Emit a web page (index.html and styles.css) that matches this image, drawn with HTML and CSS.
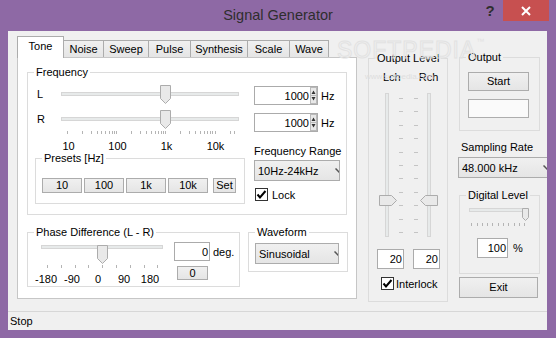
FILE: index.html
```html
<!DOCTYPE html>
<html>
<head>
    <meta charset="utf-8">
    <title>Signal Generator</title>
    <link rel="stylesheet" href="styles.css">
</head>
<body>
<div class="window">
    <div class="titlebar">
        <div></div>
        <div class="title">Signal Generator</div>
        <div class="caption-buttons">
            <span class="help">?</span>
            <span class="close"><svg width="10" height="10" viewBox="0 0 10 10"><path d="M1 1L9 9M9 1L1 9" stroke="#fff" stroke-width="2"/></svg></span>
        </div>
    </div>

    <div class="client">
        <div class="main">

            <!-- Tab control -->
            <div class="tabctl">
                <div class="tabs">
                    <div class="tab active">Tone</div>
                    <div class="tab">Noise</div>
                    <div class="tab">Sweep</div>
                    <div class="tab">Pulse</div>
                    <div class="tab">Synthesis</div>
                    <div class="tab">Scale</div>
                    <div class="tab">Wave</div>
                </div>
                <div class="page">
                    <fieldset class="freq">
                        <legend>Frequency</legend>
                        <div class="freq-body">
                            <div class="freq-left">
                                <div class="srow">
                                    <span class="slabel">L</span>
                                    <div class="hslider">
                                        <div class="track"></div>
                                        <svg class="thumb" style="left:99px" width="11" height="19" viewBox="0 0 11 19"><path d="M0.5 0.5H10.5V13.5L5.5 18.5L0.5 13.5Z" fill="#e9e9e9" stroke="#acacac"/></svg>
                                    </div>
                                </div>
                                <div class="srow">
                                    <span class="slabel">R</span>
                                    <div class="hslider">
                                        <div class="track"></div>
                                        <svg class="thumb" style="left:99px" width="11" height="19" viewBox="0 0 11 19"><path d="M0.5 0.5H10.5V13.5L5.5 18.5L0.5 13.5Z" fill="#e9e9e9" stroke="#acacac"/></svg>
                                    </div>
                                </div>
                                <svg class="ticks freq-ticks" width="178" height="3"><path d="M6.5 0V3M21.5 0V3M30.5 0V3M36.5 0V3M40.5 0V3M44.5 0V3M48.5 0V3M51.5 0V3M53.5 0V3M55.5 0V3M70.5 0V3M79.5 0V3M85.5 0V3M90.5 0V3M94.5 0V3M97.5 0V3M100.5 0V3M102.5 0V3M104.5 0V3M119.5 0V3M128.5 0V3M134.5 0V3M139.5 0V3M143.5 0V3M146.5 0V3M149.5 0V3M151.5 0V3M154.5 0V3M169.5 0V3M173.5 0V3" stroke="#b4b4b4"/></svg>
                                <div class="scale freq-scale"><span>10</span><span>100</span><span>1k</span><span>10k</span></div>
                                <fieldset class="presets">
                                    <legend>Presets [Hz]</legend>
                                    <div class="preset-buttons">
                                        <div class="button">10</div>
                                        <div class="button">100</div>
                                        <div class="button">1k</div>
                                        <div class="button">10k</div>
                                        <div class="button set">Set</div>
                                    </div>
                                </fieldset>
                            </div>
                            <div class="freq-right">
                                <div class="edit-row first">
                                    <div class="edit spin-edit"><span class="val">1000</span>
                                        <svg class="spin" width="7" height="17" viewBox="0 0 7 17"><rect x="0.5" y="0.5" width="6" height="16" fill="#e8e8e8" stroke="#b9b9b9"/><path d="M0.5 8.5H6.5" stroke="#b9b9b9"/><path d="M1.5 7L3.5 3.5L5.5 7Z M1.5 10L3.5 13.5L5.5 10Z" fill="#333"/></svg>
                                    </div>
                                    <span class="unit">Hz</span>
                                </div>
                                <div class="edit-row second">
                                    <div class="edit spin-edit"><span class="val">1000</span>
                                        <svg class="spin" width="7" height="17" viewBox="0 0 7 17"><rect x="0.5" y="0.5" width="6" height="16" fill="#e8e8e8" stroke="#b9b9b9"/><path d="M0.5 8.5H6.5" stroke="#b9b9b9"/><path d="M1.5 7L3.5 3.5L5.5 7Z M1.5 10L3.5 13.5L5.5 10Z" fill="#333"/></svg>
                                    </div>
                                    <span class="unit">Hz</span>
                                </div>
                                <div class="caption range-cap">Frequency Range</div>
                                <div class="combo range">10Hz-24kHz<svg class="chev" width="8" height="5" viewBox="0 0 8 5"><path d="M0.5 0.5L4 4L7.5 0.5" fill="none" stroke="#555" stroke-width="1.5"/></svg></div>
                                <div class="check lock">
                                    <svg width="13" height="13" viewBox="0 0 13 13"><rect x="0.5" y="0.5" width="12" height="12" fill="#fff" stroke="#333"/><path d="M2.5 6.5L5 9.5L10.5 3" fill="none" stroke="#000" stroke-width="2"/></svg>
                                    <span>Lock</span>
                                </div>
                            </div>
                        </div>
                    </fieldset>

                    <div class="page-row">
                        <fieldset class="phase">
                            <legend>Phase Difference (L - R)</legend>
                            <div class="phase-body">
                                <div class="phase-left">
                                    <div class="hslider phase-slider">
                                        <div class="track"></div>
                                        <svg class="thumb" style="left:56px" width="11" height="19" viewBox="0 0 11 19"><path d="M0.5 0.5H10.5V13.5L5.5 18.5L0.5 13.5Z" fill="#e9e9e9" stroke="#acacac"/></svg>
                                    </div>
                                    <svg class="ticks phase-ticks" width="122" height="3"><path d="M6.5 0V3M20.5 0V3M34.5 0V3M47.5 0V3M61.5 0V3M75.5 0V3M89.5 0V3M103.5 0V3M116.5 0V3" stroke="#b4b4b4"/></svg>
                                    <div class="scale phase-scale"><span>-180</span><span>-90</span><span>0</span><span>90</span><span>180</span></div>
                                </div>
                                <div class="phase-right">
                                    <div class="edit-row">
                                        <div class="edit deg-edit"><span class="val">0</span></div>
                                        <span class="unit">deg.</span>
                                    </div>
                                    <div class="button zero">0</div>
                                </div>
                            </div>
                        </fieldset>
                        <fieldset class="waveform">
                            <legend>Waveform</legend>
                            <div class="combo wave">Sinusoidal<svg class="chev" width="8" height="5" viewBox="0 0 8 5"><path d="M0.5 0.5L4 4L7.5 0.5" fill="none" stroke="#555" stroke-width="1.5"/></svg></div>
                        </fieldset>
                    </div>
                </div>
            </div>

            <!-- Output level -->
            <fieldset class="outlevel">
                <legend>Output Level</legend>
                <div class="chan-labels"><span>Lch</span><span class="rch">Rch</span></div>
                <div class="vsliders">
                    <div class="vslider left">
                        <div class="vtrack"></div>
                        <svg class="vthumb" style="top:102px" width="18" height="11" viewBox="0 0 18 11"><path d="M0.5 0.5H12.5L17.5 5.5L12.5 10.5H0.5Z" fill="#e9e9e9" stroke="#acacac"/></svg>
                    </div>
                    <svg class="vticks" width="23" height="144"><path d="M2 5.5H6M17 5.5H21M2 18.5H6M17 18.5H21M2 32.5H6M17 32.5H21M2 45.5H6M17 45.5H21M2 59.5H6M17 59.5H21M2 72.5H6M17 72.5H21M2 85.5H6M17 85.5H21M2 99.5H6M17 99.5H21M2 112.5H6M17 112.5H21M2 126.5H6M17 126.5H21M2 139.5H6M17 139.5H21" stroke="#c4c4c4"/></svg>
                    <div class="vslider right">
                        <div class="vtrack"></div>
                        <svg class="vthumb" style="top:102px" width="18" height="11" viewBox="0 0 18 11"><path d="M17.5 0.5H5.5L0.5 5.5L5.5 10.5H17.5Z" fill="#e9e9e9" stroke="#acacac"/></svg>
                    </div>
                </div>
                <div class="level-edits">
                    <div class="edit level-edit"><span class="val">20</span></div>
                    <div class="edit level-edit"><span class="val">20</span></div>
                </div>
                <div class="check interlock">
                    <svg width="13" height="13" viewBox="0 0 13 13"><rect x="0.5" y="0.5" width="12" height="12" fill="#fff" stroke="#333"/><path d="M2.5 6.5L5 9.5L10.5 3" fill="none" stroke="#000" stroke-width="2"/></svg>
                    <span>Interlock</span>
                </div>
            </fieldset>

            <!-- Right column -->
            <div class="side">
                <fieldset class="output">
                    <legend>Output</legend>
                    <div class="button start">Start</div>
                    <div class="blank"></div>
                </fieldset>
                <div class="caption rate-cap">Sampling Rate</div>
                <div class="combo rate">48.000 kHz<svg class="chev" width="8" height="5" viewBox="0 0 8 5"><path d="M0.5 0.5L4 4L7.5 0.5" fill="none" stroke="#555" stroke-width="1.5"/></svg></div>
                <fieldset class="digital">
                    <legend>Digital Level</legend>
                    <div class="hslider small">
                        <div class="track"></div>
                        <svg class="thumb" style="left:53px" width="7" height="13" viewBox="0 0 7 13"><path d="M0.5 0.5H6.5V9.5L3.5 12.5L0.5 9.5Z" fill="#e9e9e9" stroke="#acacac"/></svg>
                    </div>
                    <svg class="ticks digital-ticks" width="60" height="3"><path d="M2.5 0V3M8.5 0V3M13.5 0V3M18.5 0V3M23.5 0V3M29.5 0V3M34.5 0V3M39.5 0V3M45.5 0V3M50.5 0V3M55.5 0V3" stroke="#b4b4b4"/></svg>
                    <div class="edit-row pct-row">
                        <div class="edit pct-edit"><span class="val">100</span></div>
                        <span class="unit">%</span>
                    </div>
                </fieldset>
                <div class="button exit">Exit</div>
            </div>

            <!-- watermark over the dialog -->
            <div class="watermark">SOFTPEDIA<span class="tm">™</span></div>
            <div class="watermark-url">www.softpedia.com</div>
        </div>
        <div class="status">Stop</div>
    </div>
</div>
</body>
</html>
```

FILE: styles.css
```css
/* --- Base --- */
* { box-sizing: border-box; }
body { margin: 0; background: #8e69a5; font-family: "Liberation Sans", Arial, sans-serif; font-size: 11px; color: #000; }
.window { position: relative; width: 556px; height: 338px; background: #8e69a5; display: flex; flex-direction: column; }

/* --- Title bar --- */
.titlebar { height: 31px; flex: none; display: grid; grid-template-columns: 1fr auto 1fr; }
.title { line-height: 31px; font-size: 14.5px; color: #2e2e2e; }
.caption-buttons { display: flex; justify-content: flex-end; align-items: flex-start; padding-right: 7px; }
.help { width: 26px; height: 21px; line-height: 21px; text-align: center; font-size: 15px; font-weight: bold; color: #2e2e2e; }
.close { width: 46px; height: 21px; background: #c75050; display: flex; align-items: center; justify-content: center; }

/* --- Client area --- */
.client { flex: 1; margin: 0 9px 8px 8px; background: #f0f0f0; display: flex; flex-direction: column; overflow: hidden; }
.main { position: relative; flex: 1; display: flex; align-items: flex-start; padding: 5px 0 0 9px; }
.status { height: 19px; flex: none; border-top: 1px solid #d7d7d7; padding-left: 2px; line-height: 19px; }

/* --- Common controls --- */
fieldset { margin: 0; padding: 0; min-width: 0; border: 1px solid #dcdcdc; }
legend { margin-left: 6px; padding: 0 2px; line-height: 13px; }
.button { border: 1px solid #acacac; background: linear-gradient(#f0f0f0, #e5e5e5); text-align: center; }
.edit { display: flex; align-items: center; border: 1px solid #ababab; background: #fff; }
.edit .val { flex: 1; text-align: right; padding-right: 1px; }
.edit-row { display: flex; align-items: center; }
.unit { margin-left: 3px; }
.caption { line-height: 13px; }
.combo { display: flex; align-items: center; height: 21px; padding-left: 3px; border: 1px solid #acacac; background: linear-gradient(#f0f0f0, #e5e5e5); overflow: hidden; white-space: nowrap; }
.combo .chev { margin-left: auto; margin-right: -4px; flex: none; }
.check { display: flex; align-items: center; gap: 4px; height: 13px; }
.check svg { flex: none; }

/* --- Sliders --- */
.hslider { position: relative; width: 178px; height: 19px; }
.track { height: 4px; margin-top: 7px; border: 1px solid #d6d6d6; background: #e7eaea; }
.thumb { position: absolute; top: 0; }
.ticks { display: block; }
.scale { display: flex; }
.scale span { text-align: center; }

/* --- Tabs --- */
.tabctl { width: 340px; flex: none; display: flex; flex-direction: column; }
.tabs { height: 21px; display: flex; align-items: flex-end; }
.tab { height: 17px; margin-right: -1px; border: 1px solid #acacac; border-bottom: none; background: linear-gradient(#f0f0f0, #e5e5e5); text-align: center; line-height: 16px; }
.tab.active { position: relative; z-index: 1; height: 22px; margin-bottom: -1px; background: #fff; line-height: 18px; }
.tab:nth-child(1) { width: 47px; }
.tab:nth-child(2) { width: 41px; }
.tab:nth-child(3) { width: 46px; }
.tab:nth-child(4) { width: 43px; }
.tab:nth-child(5) { width: 58px; }
.tab:nth-child(6) { width: 43px; }
.tab:nth-child(7) { width: 40px; }
.page { height: 242px; padding-left: 9px; border: 1px solid #c6c6c6; background: #fff; display: flex; flex-direction: column; }

/* --- Frequency group --- */
.freq { width: 320px; height: 149px; margin-top: 8px; }
.freq-body { display: flex; }
.freq-left { width: 226px; flex: none; }
.srow { display: flex; height: 19px; margin-top: 6px; }
.slabel { width: 33px; padding-left: 9px; line-height: 19px; }
.freq-ticks { margin: 2px 0 0 33px; }
.freq-scale { height: 12px; margin: 6px 0 0 16px; line-height: 12px; }
.freq-scale span { width: 49px; }
.presets { width: 210px; height: 52px; margin-left: 7px; }
.preset-buttons { display: flex; gap: 2px; margin-top: 13px; padding-left: 6px; }
.preset-buttons .button { width: 40px; height: 15px; line-height: 13px; }
.preset-buttons .set { width: 23px; margin-left: 3px; }
.freq-right { width: 92px; }
.freq-right .first { margin-top: 7px; }
.freq-right .second { margin-top: 8px; }
.spin-edit { width: 64px; height: 19px; }
.spin { flex: none; margin-right: 0; }
.range-cap { margin-top: 13px; }
.combo.range { width: 86px; margin-top: 2px; }
.lock { margin: 7px 0 0 1px; }

/* --- Phase / Waveform --- */
.page-row { display: flex; align-items: flex-start; gap: 8px; margin-top: 11px; }
.phase { width: 213px; height: 61px; }
.phase-body { display: flex; }
.phase-left { width: 122px; margin-left: 13px; flex: none; }
.phase-slider { width: 122px; margin-top: 2px; }
.phase-slider .track { margin-top: 6px; }
.phase-ticks { margin-top: 1px; }
.phase-scale { height: 13px; margin: 5px 0 0 -8px; line-height: 13px; }
.phase-scale span { width: 27.5px; }
.phase-right { margin-left: 11px; }
.phase-right .edit-row { margin-top: 3px; }
.deg-edit { width: 36px; height: 19px; }
.button.zero { width: 31px; height: 14px; margin: 5px 0 0 3px; line-height: 12px; }
.waveform { width: 100px; height: 46px; }
.combo.wave { width: 84px; margin: 4px 0 0 6px; }

/* --- Output level --- */
.outlevel { width: 80px; height: 250px; margin: 16px 0 0 11px; flex: none; }
.chan-labels { display: flex; margin-top: 6px; padding-left: 14px; line-height: 13px; }
.chan-labels .rch { margin-left: 18px; }
.vsliders { display: flex; margin-top: 9px; padding-left: 10px; }
.vslider { position: relative; width: 18px; height: 144px; }
.vtrack { width: 4px; height: 144px; border: 1px solid #d6d6d6; background: #e7eaea; }
.vslider.left .vtrack { margin-left: 6px; }
.vslider.right .vtrack { margin-left: 7px; }
.vthumb { position: absolute; left: 0; }
.vticks { display: block; }
.level-edits { display: flex; gap: 9px; margin-top: 12px; padding-left: 8px; }
.level-edit { width: 27px; height: 20px; }
.interlock { gap: 2px; margin-top: 8px; padding-left: 12px; }

/* --- Right column --- */
.side { width: 81px; margin-left: 11px; flex: none; display: flex; flex-direction: column; }
.output { height: 80px; margin-top: 15px; }
.button.start { width: 61px; height: 19px; margin: 8px 0 0 8px; line-height: 17px; }
.blank { width: 61px; height: 19px; margin: 8px 0 0 8px; border: 1px solid #adadad; background: #fafafa; }
.rate-cap { margin-top: 10px; padding-left: 2px; }
.combo.rate { width: 90px; margin: 3px 0 0 -1px; flex: none; }
.digital { height: 85px; margin-top: 11px; }
.hslider.small { width: 60px; height: 13px; margin: 6px 0 0 9px; }
.hslider.small .track { width: 57px; margin-top: 3px; }
.digital-ticks { margin: 2px 0 0 9px; }
.pct-row { margin: 12px 0 0 17px; }
.pct-edit { width: 31px; height: 20px; }
.pct-row .unit { margin-left: 5px; }
.button.exit { width: 79px; height: 21px; margin-top: 3px; line-height: 19px; }

/* --- Watermark (lies over the dialog) --- */
.watermark { position: absolute; left: 329px; top: 6px; font-size: 23px; letter-spacing: 1px; color: transparent; -webkit-text-stroke: 1px #e2e2e2; pointer-events: none; }
.watermark .tm { font-size: 8px; vertical-align: top; -webkit-text-stroke: 0; color: #e2e2e2; }
.watermark-url { position: absolute; left: 357px; top: 41px; font-size: 8px; color: #dedede; pointer-events: none; }
```
